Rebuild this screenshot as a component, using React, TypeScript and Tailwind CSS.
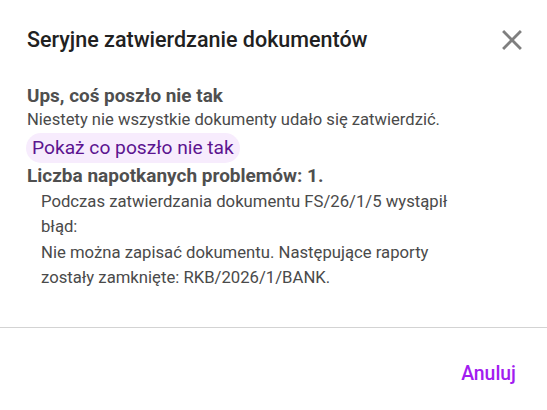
import React from "react";

function CloseIcon() {
  return (
    <svg width="34" height="34" viewBox="0 0 24 24" fill="#7f7f7f">
      <path d="M19 6.41 17.59 5 12 10.59 6.41 5 5 6.41 10.59 12 5 17.59 6.41 19 12 13.41 17.59 19 19 17.59 13.41 12z" />
    </svg>
  );
}

export default function App() {
  return (
    <div className="w-[547px] h-[410px] bg-white flex flex-col font-['Roboto',sans-serif]">
      <header className="flex items-center justify-between pl-[27px] pr-[18px] pt-[23px]">
        <h2 className="text-[21.5px] leading-[34px] font-medium text-[#212121]">
          Seryjne zatwierdzanie dokumentów
        </h2>
        <button className="text-[#7f7f7f]">
          <CloseIcon />
        </button>
      </header>

      <section className="pl-[27px] pr-[77px] pt-[27px] text-[#4a4a4a]">
        <h3 className="text-[18.9px] leading-[24px] font-bold text-[#4f4f4f]">
          Ups, coś poszło nie tak
        </h3>
        <p className="text-[16.6px] leading-[24px]">
          Niestety nie wszystkie dokumenty udało się zatwierdzić.
        </p>
        <button className="mt-[1px] -ml-[1px] h-[30px] px-[6px] rounded-full bg-[#f7ecfd] text-[19.2px] text-[#5c1490]">
          Pokaż co poszło nie tak
        </button>
        <h3 className="text-[19px] leading-[26px] font-bold text-[#4f4f4f]">
          Liczba napotkanych problemów: 1.
        </h3>
        <div className="ml-[14px] text-[16.7px] leading-[25.3px]">
          <p>Podczas zatwierdzania dokumentu FS/26/1/5 wystąpił błąd:</p>
          <p>
            Nie można zapisać dokumentu. Następujące raporty zostały zamknięte:
            RKB/2026/1/BANK.
          </p>
        </div>
      </section>

      <div className="mt-auto border-t border-[#d3d3d3]" />
      <footer className="flex justify-end h-[82px] items-center pr-[31px] pt-[10px]">
        <button className="text-[19.4px] font-medium text-[#a21cf0]">Anuluj</button>
      </footer>
    </div>
  );
}
